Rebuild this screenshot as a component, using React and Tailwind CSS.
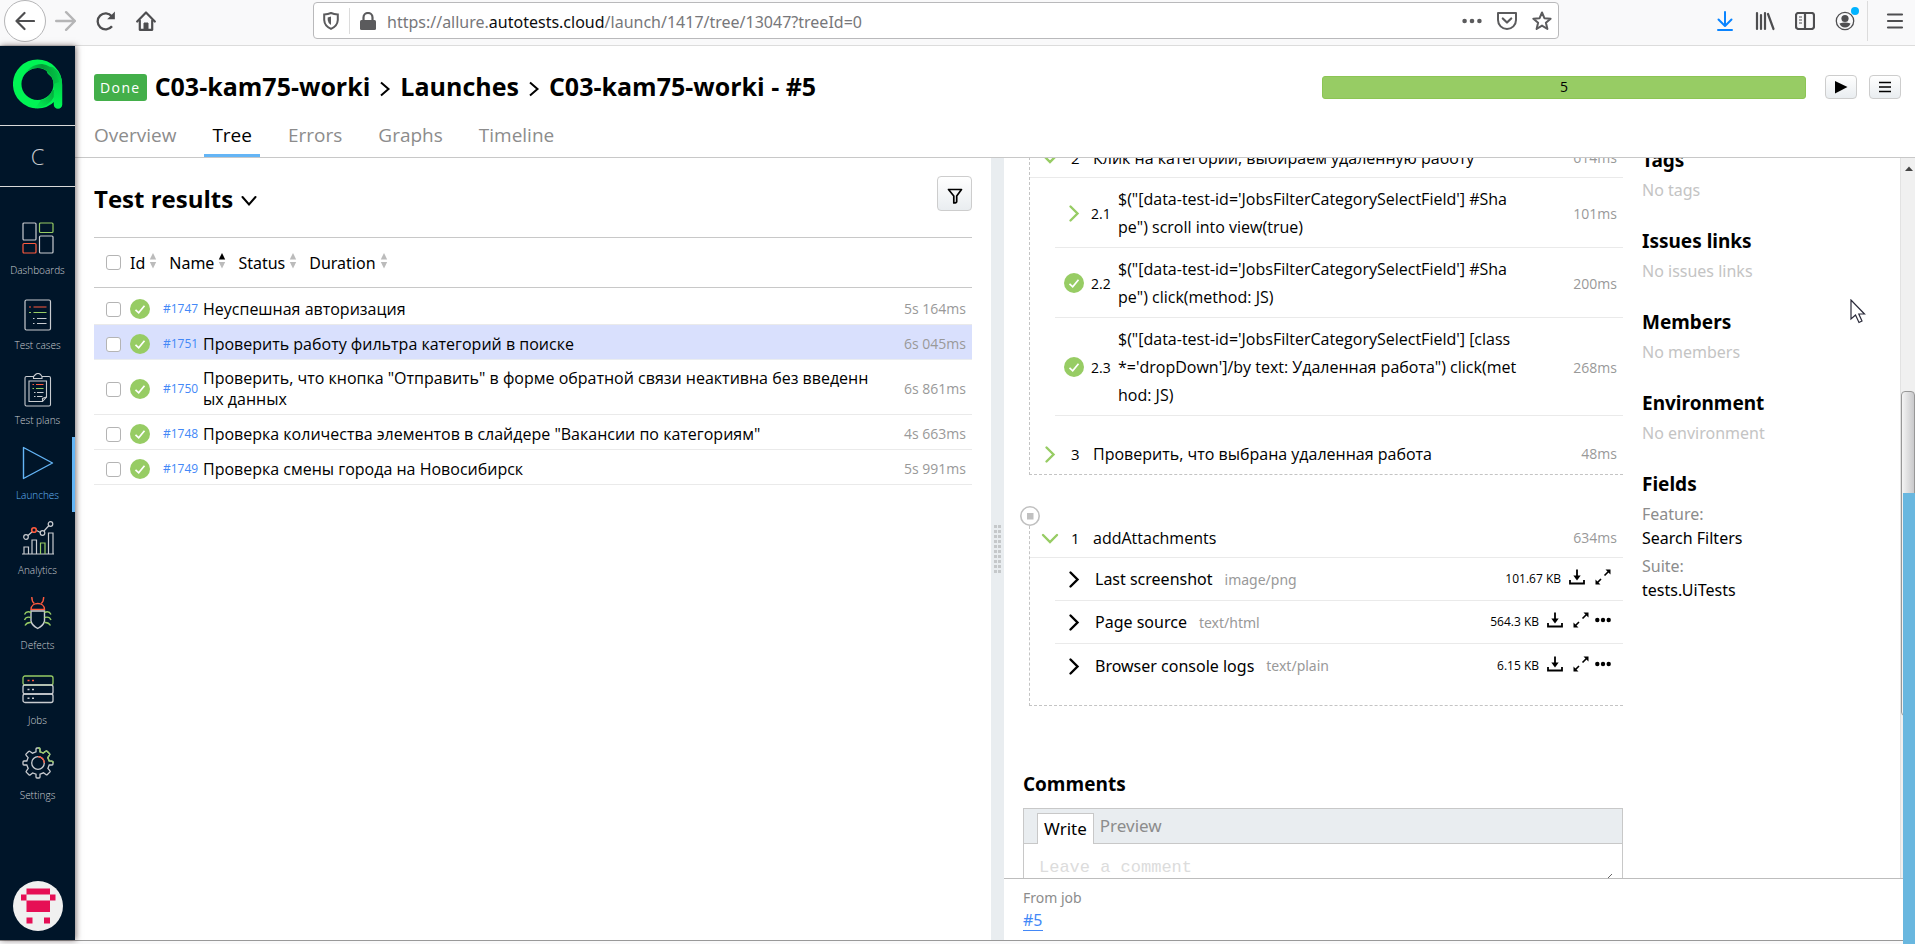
import React from "react";

const tests = [
  { id: "#1747", lines: ["Неуспешная авторизация"], time: "5s 164ms" },
  { id: "#1751", lines: ["Проверить работу фильтра категорий в поиске"], time: "6s 045ms", active: true },
  {
    id: "#1750",
    lines: ['Проверить, что кнопка "Отправить" в форме обратной связи неактивна без введенн', "ых данных"],
    time: "6s 861ms",
  },
  { id: "#1748", lines: ['Проверка количества элементов в слайдере "Вакансии по категориям"'], time: "4s 663ms" },
  { id: "#1749", lines: ["Проверка смены города на Новосибирск"], time: "5s 991ms" },
];

const subSteps = [
  { no: "2.1", open: true, lines: ["$(\"[data-test-id='JobsFilterCategorySelectField'] #Sha", 'pe") scroll into view(true)'], time: "101ms" },
  { no: "2.2", lines: ["$(\"[data-test-id='JobsFilterCategorySelectField'] #Sha", 'pe") click(method: JS)'], time: "200ms" },
  {
    no: "2.3",
    lines: ["$(\"[data-test-id='JobsFilterCategorySelectField'] [class", "*='dropDown']/by text: Удаленная работа\") click(met", "hod: JS)"],
    time: "268ms",
  },
];

const attachments = [
  { name: "Last screenshot", type: "image/png", size: "101.67 KB" },
  { name: "Page source", type: "text/html", size: "564.3 KB", more: true },
  { name: "Browser console logs", type: "text/plain", size: "6.15 KB", more: true },
];

const meta = [
  { title: "Tags", empty: "No tags" },
  { title: "Issues links", empty: "No issues links" },
  { title: "Members", empty: "No members" },
  { title: "Environment", empty: "No environment" },
];

const GREY = "#c9ccd0";
const GREEN = "#97cc64";
const RED = "#fd5a3e";

function DashboardsIcon() {
  return (
    <svg viewBox="0 0 32 32" className="size-8" fill="none" stroke={GREY} strokeWidth="1.2">
      <rect x="1" y="1" width="13" height="17" rx="1" />
      <rect x="17.500" y="1" width="13.500" height="9.500" rx="1" stroke={GREEN} />
      <rect x="1" y="21.500" width="13" height="9.500" rx="1" stroke={RED} />
      <rect x="17.500" y="14" width="13.500" height="17" rx="1" />
    </svg>
  );
}

function CasesIcon() {
  return (
    <svg viewBox="0 0 32 32" className="mt-1 size-8" fill="none" stroke={GREY} strokeWidth="1.2">
      <rect x="3" y="1" width="25.500" height="30" rx="1.500" />
      <path d="M7 8h2M11.500 8H24.500" stroke={RED} />
      <path d="M7 13.500h2M11.500 13.500H24.500" stroke={GREEN} />
      <path d="M11 19.500h1.500M15 19.500H24.500M11 24.500h1.500M15 24.500H24.500" />
    </svg>
  );
}

function PlansIcon() {
  return (
    <svg viewBox="0 0 32 34" className="mt-1 h-[34px] w-8" fill="none" stroke={GREY} strokeWidth="1.1">
      <path d="M11.500 3.500H4.500Q3 3.500 3 5V31.500Q3 33 4.500 33H27Q28.500 33 28.500 31.500V5Q28.500 3.500 27 3.500H20L18.500 1.500Q16 -0.500 13.500 1.500L11.500 3.500V5.500H20V3.500" />
      <path d="M7 8H24.500V24L20.500 28.500H7Z" />
      <path d="M20.500 28.500V25.500L24.500 24" />
      <path d="M10.500 11.500h1.500M14 11.500h7.500" stroke={RED} />
      <path d="M10.500 15.500h1.500M14 15.500h7.500" stroke={GREEN} />
      <path d="M12 19.500h1.500M15 19.500h6.500M12 23.500h1.500M15 23.500h5.500" />
    </svg>
  );
}

function LaunchesIcon() {
  return (
    <svg viewBox="0 0 32 34" className="h-[34px] w-8" fill="none" stroke="#64b5f6" strokeWidth="1.4" strokeLinejoin="round">
      <path d="M1.500 1.500V32.500L30.500 17Z" />
    </svg>
  );
}

function AnalyticsIcon() {
  return (
    <svg viewBox="0 0 32 34" className="h-[34px] w-8" fill="none" stroke={GREY} strokeWidth="1.2">
      <path d="M0 33H32M2 33V26H6.500V33M10 33V19H14.500V33M26.500 33V12H31V33" />
      <path d="M18.500 33V22H23V33" stroke={GREEN} />
      <path d="M6 14.500L10.500 10.500M14.500 9.500L18.500 11.500M22 10L27 4.500" />
      <circle cx="4" cy="16" r="2.300" />
      <circle cx="20.500" cy="12" r="2.300" />
      <circle cx="28.500" cy="3" r="2.300" />
      <circle cx="12" cy="9" r="2.300" stroke={RED} strokeWidth="1.600" />
    </svg>
  );
}

function DefectsIcon() {
  return (
    <svg viewBox="0 0 32 34" className="h-[34px] w-8" fill="none" strokeWidth="1.4">
      <path d="M9 13.500C9 5.500 22.500 5.500 22.500 13.500Z" stroke={RED} />
      <path d="M9.800 1C9.800 4 10.500 6 12.300 7.500M21.700 1C21.700 4 21 6 19.200 7.500" stroke={RED} />
      <path d="M9 15H22.500V25Q21.500 29.500 15.700 32.500Q10 29.500 9 25Z" stroke={GREY} />
      <path d="M9 16.500Q4.500 14.500 2.500 18.500M9 21.500Q4 20 2.500 24M9 26.500Q5 26 3 29.500M22.500 16.500Q27 14.500 29 18.500M22.500 21.500Q27.500 20 29 24M22.500 26.500Q26.500 26 28.500 29.500" stroke={GREEN} />
    </svg>
  );
}

function JobsIcon() {
  return (
    <svg viewBox="0 0 32 32" className="mt-1 size-8" fill="none" stroke={GREY} strokeWidth="1.3">
      <rect x="1" y="2" width="30" height="9" rx="2" stroke={GREEN} />
      <rect x="1" y="11" width="30" height="9" rx="2" />
      <rect x="1" y="20" width="30" height="8.500" rx="2" />
      <path d="M5.500 6.500h2M10 6.500h2" stroke={RED} strokeWidth="1.600" />
      <path d="M5.500 15.500h2M10 15.500h2M5.500 24.300h2M10 24.300h2" strokeWidth="1.600" />
    </svg>
  );
}

const GEAR =
  "M14 4.800V2Q14 1 15 1H17Q18 1 18 2V4.800L21.300 6.100L23.600 4.200Q24.400 3.500 25.100 4.200L27.500 6.600Q28.200 7.300 27.500 8.100L25.800 10.500L27.100 13.800L30 14.200Q31 14.300 31 15V17Q31 18 30 18H27.200L25.900 21.300L27.800 23.600Q28.500 24.400 27.800 25.100L25.400 27.500Q24.700 28.200 23.900 27.500L21.500 25.800L18 27.200V30Q18 31 17 31H15Q14 31 14 30V27.200L10.700 25.900L8.400 27.800Q7.600 28.500 6.900 27.800L4.500 25.400Q3.800 24.700 4.500 23.900L6.200 21.500L4.800 18H2Q1 18 1 17V15Q1 14 2 14H4.800L6.100 10.700L4.200 8.400Q3.500 7.600 4.200 6.900L6.600 4.500Q7.300 3.800 8.100 4.500L10.500 6.200Z";

function SettingsIcon() {
  return (
    <svg viewBox="0 0 32 32" className="size-8" fill="none" stroke={GREY} strokeWidth="1.3">
      <path d={GEAR} />
      <path d="M16 1H17Q18 1 18 2V4.800L21.300 6.100L23.600 4.200Q24.400 3.500 25.100 4.200L27.500 6.600Q28.200 7.300 27.500 8.100L25.800 10.500L27.100 13.800L30 14.200Q31 14.300 31 15V16" stroke={GREEN} />
      <circle cx="16" cy="16" r="6.300" />
      <path d="M16 9.700A6.300 6.300 0 0 1 22.300 16" stroke={RED} />
    </svg>
  );
}

const nav = [
  ["Dashboards", DashboardsIcon],
  ["Test cases", CasesIcon],
  ["Test plans", PlansIcon],
  ["Launches", LaunchesIcon],
  ["Analytics", AnalyticsIcon],
  ["Defects", DefectsIcon],
  ["Jobs", JobsIcon],
  ["Settings", SettingsIcon],
];

function CheckBadge() {
  return (
    <svg viewBox="0 0 20 20" className="size-5 shrink-0" role="img" aria-label="Passed">
      <circle cx="10" cy="10" r="10" fill={GREEN} />
      <path d="M5.500 10.800L8.700 13.800L14.500 6.800" fill="none" stroke="#fff" strokeWidth="1.700" />
    </svg>
  );
}

function Chevron({ down, color }) {
  return (
    <svg viewBox="0 0 20 20" className="size-5 shrink-0" fill="none" stroke={color} strokeWidth="2.400" strokeLinecap="round">
      <path d={down ? "M3 7L10 14L17 7" : "M6.500 3.500L13.500 10.500L6.500 17.500"} />
    </svg>
  );
}

function SortArrows({ up }) {
  return (
    <svg viewBox="0 0 8 16" className="mb-1 h-4 w-2">
      <path d="M4 0L7.200 6.500H0.800Z" fill={up ? "#000" : "#bbb"} />
      <path d="M4 15.500L7.200 9H0.800Z" fill="#bbb" />
    </svg>
  );
}

function Box({ label }) {
  return (
    <input
      type="checkbox"
      aria-label={label}
      className="size-[15px] shrink-0 appearance-none rounded-[3px] border border-[#b4b4b4] bg-white"
    />
  );
}

function BrowserBar() {
  return (
    <header className="flex h-[46px] shrink-0 items-center border-b border-[#dcdcdc] bg-[#f9f9fa] pb-1 text-[#4e4e50]">
      <div className="flex items-center gap-5 pl-1">
        <button aria-label="Back" className="grid size-[42px] place-items-center rounded-full border border-[#b5b5b7] bg-white">
          <svg viewBox="0 0 20 20" className="size-5" fill="none" stroke="currentColor" strokeWidth="2.200" strokeLinecap="round" strokeLinejoin="round">
            <path d="M19 10H1.500M9.500 2L1.500 10L9.500 18" />
          </svg>
        </button>
        <div className="-ml-3 flex items-center gap-5">
          <button aria-label="Forward" className="text-[#b5b5b6]">
            <svg viewBox="0 0 20 20" className="size-[22px]" fill="none" stroke="currentColor" strokeWidth="2.200" strokeLinecap="round" strokeLinejoin="round">
              <path d="M2 10H19M11 2L19 10L11 18" />
            </svg>
          </button>
          <button aria-label="Reload">
            <svg viewBox="0 0 20 20" className="size-5" fill="none" stroke="currentColor" strokeWidth="2.300">
              <path d="M16 15.200A8 8 0 1 1 15.800 5.200L17 6.600" />
              <path d="M18.900 0.500V8.200H11.200Z" fill="currentColor" stroke="none" />
            </svg>
          </button>
          <button aria-label="Home">
            <svg viewBox="0 0 20 20" className="size-5" fill="none" stroke="currentColor" strokeWidth="2.200" strokeLinejoin="round" strokeLinecap="round">
              <path d="M1.200 10.500L10 1.500L18.800 10.500" />
              <path d="M3.800 9.500V18.800H16.200V9.500" />
              <path d="M8 18.500V12H12V18.500Z" fill="currentColor" strokeWidth="1" />
            </svg>
          </button>
        </div>
      </div>
      <div className="mr-[158px] ml-[157px] flex h-[37px] flex-1 items-center rounded-sm border border-[#b9b9bb] bg-white pr-2.5 pl-[9px]">
        <svg viewBox="0 0 16 18" className="h-[18px] w-4" fill="none" stroke="#5b5b5d" strokeWidth="2">
          <path d="M1.200 2.500Q5 2.300 8 1Q11 2.300 14.800 2.500V8Q14.500 14 8 16.800Q1.500 14 1.200 8Z" />
          <path d="M8 4.500V13Q5 11.500 4.700 8V5.500Z" fill="#5b5b5d" stroke="none" />
        </svg>
        <span className="mx-2.5 h-[26px] w-px bg-[#dcdcdc]" />
        <svg viewBox="0 0 16 18" className="h-[18px] w-4" fill="#5b5b5d">
          <rect x="0" y="8" width="16" height="10" rx="1.500" />
          <path d="M3.500 9V5.500A4.500 4.500 0 0 1 12.500 5.500V9" fill="none" stroke="#5b5b5d" strokeWidth="2.200" />
        </svg>
        <a href="#address" className="ml-[11px] flex-1 pt-0.5 font-['Noto_Sans',sans-serif] text-[16px] text-[#77777a]">
          https://allure.<span className="text-[#0c0c0d]">autotests.cloud</span>/launch/1417/tree/13047?treeId=0
        </a>
        <div className="flex items-center gap-[15px]">
          <svg viewBox="0 0 20 20" className="size-5" fill="#5b5b5d">
            <circle cx="2.600" cy="10" r="2.300" />
            <circle cx="10" cy="10" r="2.300" />
            <circle cx="17.400" cy="10" r="2.300" />
          </svg>
          <svg viewBox="0 0 20 18" className="h-[18px] w-5" fill="none" stroke="#5b5b5d" strokeWidth="2" strokeLinecap="round" strokeLinejoin="round">
            <path d="M1 1H19V8A9 9 0 0 1 1 8Z" />
            <path d="M5.800 6.500L10 10.500L14.200 6.500" strokeWidth="2.200" />
          </svg>
          <svg viewBox="0 0 20 20" className="-mr-1 size-5" fill="none" stroke="#5b5b5d" strokeWidth="2" strokeLinejoin="round">
            <path d="M10 1.500L12.400 7.200L18.600 7.700L13.900 11.700L15.400 18L10 14.600L4.600 18L6.100 11.700L1.400 7.700L7.600 7.200Z" />
          </svg>
        </div>
      </div>
      <div className="flex items-center gap-5 pr-[11px]">
        <button aria-label="Downloads" className="text-[#0a84ff]">
          <svg viewBox="0 0 18 20" className="h-5 w-[18px]" fill="none" stroke="currentColor" strokeWidth="2" strokeLinecap="round" strokeLinejoin="round">
            <path d="M8 1V14.500M1.500 8.500L8 15L14.500 8.500M1 19H15" />
          </svg>
        </button>
        <button aria-label="Library">
          <svg viewBox="0 0 20 20" className="size-5" fill="none" stroke="currentColor" strokeWidth="2.200" strokeLinecap="round">
            <path d="M2 2V18M6 4V18M10 2V18M13 3L18.500 18" />
          </svg>
        </button>
        <button aria-label="Sidebars">
          <svg viewBox="0 0 20 18" className="h-[18px] w-5" fill="none" stroke="currentColor" strokeWidth="2.200">
            <rect x="1" y="1" width="18" height="16" rx="2.500" />
            <path d="M10 1V17" />
            <path d="M4 5H7M4 8H7M4 11H7" strokeWidth="1.200" />
          </svg>
        </button>
        <button aria-label="Account" className="relative">
          <svg viewBox="0 0 20 20" className="size-5" fill="currentColor">
            <circle cx="10" cy="10" r="8.700" fill="none" stroke="currentColor" strokeWidth="1.300" />
            <circle cx="10" cy="7.500" r="3.600" />
            <path d="M4.500 12.500Q10 10.500 15.500 12.500Q14 16.500 10 16.500T4.500 12.500Z" />
          </svg>
          <span className="absolute -top-1 left-4 size-2 rounded-full bg-[#00b3ff]" />
        </button>
        <div className="-ml-2 flex items-center gap-[18px]">
          <span className="h-10 w-px bg-[#dcdcdc]" />
          <button aria-label="Menu">
            <svg viewBox="0 0 18 18" className="size-[18px]" stroke="currentColor" strokeWidth="2.200" strokeLinecap="round">
              <path d="M2 2.500H16M2 9H16M2 15.500H16" />
            </svg>
          </button>
        </div>
      </div>
    </header>
  );
}

function Logo() {
  return (
    <svg viewBox="0 0 50 50" className="size-[50px]" role="img" aria-label="Allure">
      <defs>
        <linearGradient id="inner" x1="0" y1="0" x2="1" y2="0">
          <stop offset="0" stopColor="#00e04e" />
          <stop offset="0.550" stopColor="#069a38" />
          <stop offset="1" stopColor="#02c546" />
        </linearGradient>
        <linearGradient id="stem" x1="0" y1="0" x2="0" y2="1">
          <stop offset="0" stopColor="#03c044" />
          <stop offset="1" stopColor="#00f454" />
        </linearGradient>
        <linearGradient id="foot" x1="0" y1="1" x2="1" y2="0">
          <stop offset="0" stopColor="#00f454" />
          <stop offset="1" stopColor="#05a63c" />
        </linearGradient>
      </defs>
      <circle cx="24.500" cy="25" r="20.300" fill="none" stroke="#00f454" strokeWidth="8.500" />
      <path d="M22 49.300Q36 48 41 38V31H39.500A16 16 0 0 1 28 41Z" fill="url(#foot)" />
      <path d="M38 12Q45 17 45 26V45.500" fill="none" stroke="url(#stem)" strokeWidth="8.500" strokeLinecap="round" />
      <path d="M9 20Q16 5 29 5Q38 6 44 15L46 23L40.500 25A16 16 0 0 0 9 21Z" fill="url(#inner)" />
    </svg>
  );
}

function Sidebar() {
  return (
    <aside className="z-10 flex w-[75px] shrink-0 flex-col items-center bg-[#001529] shadow-[1px_0_6px_rgba(40,20,20,0.6)]">
      <a href="#home" className="grid h-20 w-full place-items-center border-b border-[#d9d9d9] pb-1">
        <Logo />
      </a>
      <a href="#project" className="grid h-[61px] w-full place-items-center border-b border-[#d9d9d9] text-[22px] font-light text-[#c9ccd0]">
        C
      </a>
      <nav className="mt-[25px] flex w-full flex-col">
        {nav.map(([name, Icon]) => (
          <a
            key={name}
            href={"#" + name}
            className={
              name === "Launches"
                ? "flex h-[75px] flex-col items-center border-r-[3px] border-[#64b5f6] pl-[3px] text-[#64b5f6]"
                : "flex h-[75px] flex-col items-center text-[#c9ccd0]"
            }
          >
            <span className="grid h-[52px] place-items-center">
              <Icon />
            </span>
            <span className="text-[10px] leading-3 font-light">{name}</span>
          </a>
        ))}
      </nav>
      <a href="#profile" aria-label="Profile" className="mt-auto mb-[9px]">
        <svg viewBox="0 0 50 50" className="size-[50px]">
          <circle cx="25" cy="25" r="25" fill="#f0f0f0" />
          <path
            d="M13.500 7.500H37V13.500H42.500V19.500H37V13.500H13.500V19.500H8V13.500H13.500ZM13.500 19.500H37V31H13.500ZM13.500 36.500H19.500V42.500H13.500ZM31 36.500H37V42.500H31Z"
            fill="#e60f55"
          />
        </svg>
      </a>
    </aside>
  );
}

function PageHeader() {
  return (
    <div className="shrink-0 border-b border-[#c8c8c8] pr-[14px] pl-[19px]">
      <div className="flex h-[78px] items-center pt-1">
        <span className="flex h-[27px] items-center rounded-[3px] bg-[#43af4a] px-1.5 text-[14px] tracking-widest text-white">Done</span>
        <h1 className="ml-2 flex items-center gap-2 text-[25px] font-bold text-black">
          <a href="#project">C03-kam75-worki</a>
          <Crumb />
          <a href="#launches">Launches</a>
          <Crumb />
          <span>C03-kam75-worki - #5</span>
        </h1>
        <div className="ml-auto grid h-[23px] w-[484px] place-items-center rounded-[3px] border border-[#8cc554] bg-[#97cc64] text-[14px] leading-4 text-black">5</div>
        <button aria-label="Run" className="ml-[19px] grid h-6 w-8 place-items-center rounded-[4px] border border-[#cdcdcd] bg-linear-to-b from-white to-[#e9edf0]">
          <svg viewBox="0 0 14 14" className="size-3.5"><path d="M1 1L13.500 7L1 13.500Z" fill="#000" /></svg>
        </button>
        <button aria-label="Actions" className="ml-3 grid h-6 w-8 place-items-center rounded-[4px] border border-[#cdcdcd] bg-linear-to-b from-white to-[#e9edf0]">
          <svg viewBox="0 0 14 12" className="h-3 w-3.5" stroke="#000" strokeWidth="1.500"><path d="M1 1.500H13M1 6H13M1 10.500H13" /></svg>
        </button>
      </div>
      <nav className="flex h-[33px] gap-5 text-[19px] leading-[22px] text-[#8c8c8c]">
        <a href="#overview" className="pr-2">Overview</a>
        <a href="#tree" className="border-b-[3px] border-[#64b5f6] px-2 text-black">Tree</a>
        <a href="#errors" className="px-2">Errors</a>
        <a href="#graphs" className="px-2">Graphs</a>
        <a href="#timeline" className="px-2">Timeline</a>
      </nav>
    </div>
  );
}

function Crumb() {
  return (
    <svg viewBox="0 0 14 18" className="mt-1 h-[18px] w-3.5" fill="none" stroke="#000" strokeWidth="2">
      <path d="M3 2.500L10.500 9L3 15.500" />
    </svg>
  );
}

function ResultsPanel() {
  return (
    <section className="min-w-0 px-[19px]">
      <div className="flex h-20 items-center justify-between border-b border-[#c8c8c8]">
        <h2 className="flex items-center gap-1.5 pt-0.5 text-[24px] font-bold text-black">
          Test results
          <svg viewBox="0 0 20 20" className="mt-1 size-5" fill="none" stroke="#000" strokeWidth="2" strokeLinecap="round">
            <path d="M3.500 6L10 13.500L16.500 6" />
          </svg>
        </h2>
        <button aria-label="Filter" className="mb-2 grid size-[35px] place-items-center rounded-[4px] border border-[#cdcdcd] bg-linear-to-b from-white to-[#e9edf0]">
          <svg viewBox="0 0 16 16" className="mt-1 size-4" fill="none" stroke="#000" strokeWidth="1.700" strokeLinejoin="round">
            <path d="M1.500 1.500H14.500L9.700 8V13.500Q9.700 15 6.800 15V8Z" />
          </svg>
        </button>
      </div>
      <div className="flex h-[50px] items-center border-b border-[#c8c8c8] pl-3 font-['Noto_Sans',sans-serif] text-[16px] text-black">
        <Box label="Select all" />
        <div className="ml-[9px] flex items-center gap-3">
          {["Id", "Name", "Status", "Duration"].map((c) => (
            <button key={c} className="flex items-center gap-1">
              {c}
              <SortArrows up={c === "Name"} />
            </button>
          ))}
        </div>
      </div>
      <ul className="pt-0.5">
        {tests.map((t) => (
          <li
            key={t.id}
            className={
              t.active
                ? "flex min-h-[35px] items-center border-b border-[#eaedf0] bg-[#d9e0fd] pt-2 pr-1.5 pb-1 pl-3"
                : "flex min-h-[35px] items-center border-b border-[#eaeaea] pt-2 pr-1.5 pb-1 pl-3"
            }
          >
            <Box label={"Select " + t.id} />
            <span className="ml-[9px]"><CheckBadge /></span>
            <a href={t.id} className="ml-[13px] w-10 text-[12px] leading-4 text-[#4388f7]">{t.id}</a>
            <span className="flex-1 text-[16px] leading-[21px] whitespace-nowrap text-black">
              {t.lines.map((l) => <span key={l} className="block">{l}</span>)}
            </span>
            <span className="text-[14px] leading-4 whitespace-nowrap text-[#999]">{t.time}</span>
          </li>
        ))}
      </ul>
    </section>
  );
}

function Splitter() {
  return (
    <div role="separator" className="flex items-center justify-center bg-[#e9edf0]">
      <div className="grid grid-cols-2 gap-x-px gap-y-0.5">
        {Array.from({ length: 20 }, (_, i) => (
          <span key={i} className="size-[3px] bg-[#c5c8ca]" />
        ))}
      </div>
    </div>
  );
}

function StepHead({ no, text, time, down }) {
  return (
    <div className="flex items-center pr-1.5 pl-2.5">
      <Chevron down={down} color={GREEN} />
      <span className="ml-[11px] w-[22px] text-[15px] leading-6">{no}</span>
      <span className="flex-1 text-[16px] leading-6">{text}</span>
      <span className="text-[14px] leading-6 text-[#999]">{time}</span>
    </div>
  );
}

function Steps() {
  return (
    <div className="ml-1.5 border-b border-l border-dashed border-[#c4c4c4]">
      <div className="border-b border-[#eaeaea] pt-[9px] pb-[7px]">
        <StepHead no="2" text="Клик на категории, выбираем удаленную работу" time="614ms" down />
      </div>
      <ul className="ml-[25px]">
        {subSteps.map((s) => (
          <li key={s.no} className="flex items-center border-b border-[#eaeaea] pt-[7px] pr-1.5 pb-1.5 pl-[9px]">
            {s.open ? <Chevron color={GREEN} /> : <CheckBadge />}
            <span className="ml-[7px] w-[27px] text-[14px]">{s.no}</span>
            <span className="flex-1 text-[16px] leading-7 whitespace-nowrap">
              {s.lines.map((l) => <span key={l} className="block">{l}</span>)}
            </span>
            <span className="text-[14px] text-[#999]">{s.time}</span>
          </li>
        ))}
      </ul>
      <div className="pt-[26px] pb-2">
        <StepHead no="3" text="Проверить, что выбрана удаленная работа" time="48ms" />
      </div>
    </div>
  );
}

function Attachments() {
  return (
    <div className="mt-[31px]">
      <svg viewBox="0 0 20 20" className="-ml-[3px] size-5">
        <circle cx="10" cy="10" r="9.200" fill="none" stroke="#c0c0c0" strokeWidth="1.600" />
        <rect x="7" y="7" width="6.500" height="6.500" fill="#c0c0c0" />
      </svg>
      <div className="ml-1.5 border-b border-l border-dashed border-[#c4c4c4] pb-[18px]">
        <div className="border-b border-[#eaeaea] pb-[7px]">
          <StepHead no="1" text="addAttachments" time="634ms" down />
        </div>
        <ul className="ml-[25px]">
          {attachments.map((a) => (
            <li key={a.name} className="flex h-[43px] items-center border-b border-[#eaeaea] pr-3 pl-[9px] last:border-b-0">
              <Chevron color="#000" />
              <span className="ml-[11px] font-['Noto_Sans',sans-serif] text-[16px]">{a.name}</span>
              <span className="ml-3 font-['Noto_Sans',sans-serif] text-[14px] text-[#999]">{a.type}</span>
              <span className="mr-2 ml-auto text-[12px]">{a.size}</span>
              <span className="flex items-center gap-2.5 pb-1">
                <button aria-label="Download">
                  <svg viewBox="0 0 16 16" className="size-4" fill="none" stroke="#000" strokeWidth="1.800">
                    <path d="M1 11V14.500H15V11M8 0.500V9" />
                    <path d="M4.300 6.500H11.700L8 11.500Z" fill="#000" stroke="none" />
                  </svg>
                </button>
                <button aria-label="Expand">
                  <svg viewBox="0 0 16 16" className="size-4" fill="none" stroke="#000" strokeWidth="1.600">
                    <path d="M9.500 6.500L14 2M1.500 14.500L6 10" />
                    <path d="M10.500 0.500H15.500V5.500ZM0.500 10.500V15.500H5.500Z" fill="#000" stroke="none" />
                  </svg>
                </button>
                {a.more && (
                  <button aria-label="More" className="-ml-1">
                    <svg viewBox="0 0 16 16" className="size-4">
                      <circle cx="2.300" cy="8" r="2.200" /><circle cx="8" cy="8" r="2.200" /><circle cx="13.700" cy="8" r="2.200" />
                    </svg>
                  </button>
                )}
              </span>
            </li>
          ))}
        </ul>
      </div>
    </div>
  );
}

function Comments() {
  return (
    <section className="mt-16">
      <h3 className="text-[19px] leading-7 font-bold">Comments</h3>
      <div className="mt-2.5 border border-[#c8c8c8]">
        <div className="flex h-[35px] items-end gap-1 border-b border-[#c8c8c8] bg-[#e9edf0] pl-[13px] font-['Noto_Sans',sans-serif] text-[17px]">
          <button className="-mb-px h-[31px] border border-b-0 border-[#c8c8c8] bg-white px-1.5 text-black">Write</button>
          <button className="h-[31px] px-0.5 pb-1 text-[#8c8c8c]">Preview</button>
        </div>
        <textarea
          aria-label="Comment"
          placeholder="Leave a comment"
          className="mx-[5px] mt-1 block h-[34px] w-[calc(100%-14px)] overflow-hidden px-2.5 py-2 font-['Liberation_Mono',monospace] text-[17px] leading-6 placeholder:text-[#dcdcdc]"
        />
      </div>
    </section>
  );
}

function DetailPanel() {
  return (
    <section className="flex min-h-0 min-w-0 flex-col">
      <div className="flex min-h-0 flex-1">
        <div className="flex min-w-0 flex-1 overflow-hidden pl-[19px]">
          <div className="-mt-[21px] min-w-0 flex-1">
            <Steps />
            <Attachments />
            <Comments />
          </div>
          <aside className="-mt-3 ml-[19px] w-[258px] shrink-0 font-['Noto_Sans',sans-serif]">
            {meta.map((m) => (
              <div key={m.title} className="mb-[25px]">
                <h3 className="text-[19px] leading-7 font-bold">{m.title}</h3>
                <p className="mt-1 text-[16px] leading-6 text-[#c4c4c4]">{m.empty}</p>
              </div>
            ))}
            <h3 className="text-[19px] leading-7 font-bold">Fields</h3>
            <dl className="mt-1 text-[16px] leading-6">
              <dt className="text-[#8c8c8c]">Feature:</dt>
              <dd>Search Filters</dd>
              <dt className="mt-1 text-[#8c8c8c]">Suite:</dt>
              <dd>tests.UiTests</dd>
            </dl>
          </aside>
        </div>
        <div className="w-[15px] shrink-0 border-l border-[#e2e2e2] bg-[#f0f0f0]">
          <svg viewBox="0 0 14 20" className="h-5 w-3.5"><path d="M4 13L8 8.500L12 13Z" fill="#444" /></svg>
          <div className="mt-[213px] h-[325px] rounded-sm border border-[#979797] bg-linear-to-r from-[#f4f4f4] to-[#c9c9cb]" />
        </div>
      </div>
      <footer className="h-[62px] shrink-0 border-t border-[#bdbdbd] pt-2 pl-[19px] font-['Noto_Sans',sans-serif]">
        <p className="text-[14px] leading-[21px] text-[#8c8c8c]">From job</p>
        <a href="#job" className="inline-block border-b border-[#4388f7] text-[16px] leading-[20px] text-[#4388f7]">#5</a>
      </footer>
    </section>
  );
}

export default function App() {
  return (
    <div className="relative flex h-screen flex-col overflow-hidden bg-white font-['Open_Sans','Noto_Sans',sans-serif] text-black">
      <BrowserBar />
      <div className="flex min-h-0 flex-1">
        <Sidebar />
        <main className="flex min-w-0 flex-1 flex-col">
          <PageHeader />
          <div className="grid min-h-0 flex-1 grid-cols-[916fr_13px_911fr]">
            <ResultsPanel />
            <Splitter />
            <DetailPanel />
          </div>
        </main>
      </div>
      <div className="h-1 shrink-0 border-t border-[#999] bg-[#f9f9fa]" />
      <div className="absolute right-0 bottom-0 h-[451px] w-3 bg-[#69b7df]" />
      <svg viewBox="0 0 16 25" className="absolute top-[299px] right-[49px] h-[25px] w-4" fill="#fff" stroke="#2a2a3a" strokeWidth="1.200">
        <path d="M1 1V20L5.500 16L9 23.500L12 22L8.800 15H14.500Z" />
      </svg>
    </div>
  );
}
